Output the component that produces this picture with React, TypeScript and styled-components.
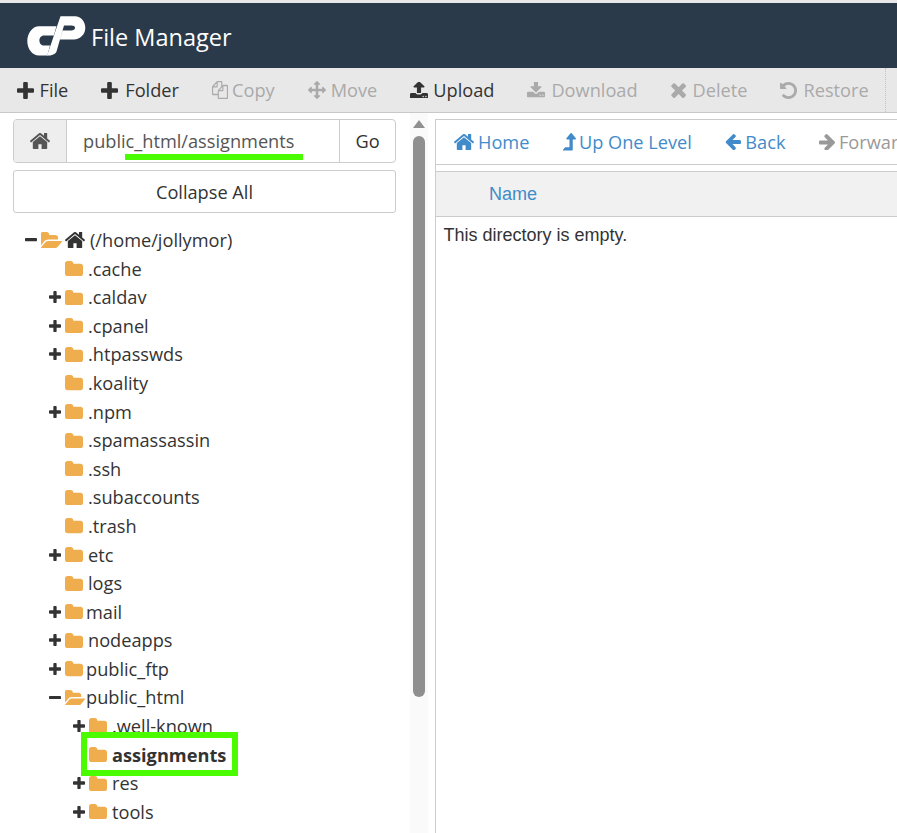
import styled, { createGlobalStyle } from 'styled-components';

const GlobalStyle = createGlobalStyle`
  html, body {
    margin: 0;
    height: 100%;
    overflow: hidden;
    background: #fff;
  }
  body {
    font-family: "Open Sans", sans-serif;
    color: #333;
  }
`;

const Page = styled.div`
  width: 897px;
  height: 833px;
  overflow: hidden;
  display: flex;
  flex-direction: column;
  border-top: 3px solid #e8e8e8;
  box-sizing: border-box;
`;

const Header = styled.header`
  flex: 0 0 65px;
  display: flex;
  align-items: center;
  background: #2b3a4a;
  color: #fff;
  padding-left: 27px;
`;

const Logo = styled.svg`
  width: 59px;
  height: 40px;
  margin-right: 5px;
`;

const Title = styled.h1`
  margin: 4px 0 0;
  font-size: 23.5px;
  font-weight: 400;
  line-height: 1;
`;

const Toolbar = styled.div`
  flex: 0 0 45px;
  box-sizing: border-box;
  display: flex;
  align-items: center;
  gap: 33px;
  padding-left: 17px;
  background: #e8e8e8;
  border-bottom: 1px solid #c8c8c8;
  font-size: 18.2px;
`;

const ToolButton = styled.span<{ $disabled?: boolean; $gap: number }>`
  display: flex;
  align-items: center;
  gap: ${(p) => p.$gap}px;
  white-space: nowrap;
  color: ${(p) => (p.$disabled ? '#aaa' : '#333')};
`;

const ToolDivider = styled.span`
  align-self: stretch;
  margin-left: -17px;
  border-left: 1px dotted #c4c4c4;
`;

const Main = styled.div`
  flex: 1;
  display: flex;
  min-height: 0;
`;

const Sidebar = styled.aside`
  flex: 0 0 410px;
  box-sizing: border-box;
  padding: 6px 14px 0 13px;
`;

const PathBar = styled.div`
  position: relative;
  display: flex;
  height: 44px;
  box-sizing: border-box;
  border: 1px solid #ccc;
  border-radius: 4px;
  font-size: 18.2px;
`;

const PathHome = styled.span`
  flex: 0 0 52px;
  display: flex;
  align-items: center;
  justify-content: center;
  background: #eee;
  border-right: 1px solid #ccc;
  border-radius: 3px 0 0 3px;
  color: #555;
`;

const PathInput = styled.span`
  flex: 1;
  padding-left: 16px;
  line-height: 42px;
  color: #555;
`;

const PathGo = styled.span`
  flex: 0 0 55px;
  text-align: center;
  line-height: 42px;
  border-left: 1px solid #ccc;
`;

const PathMark = styled.span`
  position: absolute;
  left: 111px;
  top: 34px;
  width: 178px;
  height: 6px;
  background: #4bfc00;
`;

const CollapseButton = styled.div`
  margin-top: 7px;
  height: 43px;
  box-sizing: border-box;
  border: 1px solid #ccc;
  border-radius: 3px;
  text-align: center;
  line-height: 42px;
  font-size: 18.2px;
`;

const Tree = styled.ul`
  list-style: none;
  margin: 12.7px 0 0;
  padding: 0;
`;

const TreeRow = styled.li<{ $depth: number }>`
  position: relative;
  display: flex;
  align-items: center;
  height: 28.6px;
  font-size: 18.2px;
  white-space: nowrap;
  padding-left: ${(p) => 12 + p.$depth * 24}px;
`;

const Toggle = styled.span`
  flex: 0 0 14px;
  display: flex;
  align-items: center;
  color: #333;
`;

const FolderSlot = styled.span`
  display: flex;
  align-items: center;
  margin-left: 2px;
  color: #f0ad4e;
`;

const RowLabel = styled.span<{ $bold?: boolean; $gap: number }>`
  margin-left: ${(p) => p.$gap}px;
  font-weight: ${(p) => (p.$bold ? 700 : 400)};
`;

const RootHome = styled.span`
  display: flex;
  margin-left: 3px;
  color: #333;
`;

const SelectedMark = styled.span`
  position: absolute;
  left: 68px;
  top: -8px;
  width: 157px;
  height: 44px;
  box-sizing: border-box;
  border: 6px solid #4bfc00;
`;

const ScrollBar = styled.div`
  flex: 0 0 18px;
  margin-right: 7px;
  display: flex;
  flex-direction: column;
  align-items: center;
  background: #fafafa;
`;

const ScrollArrow = styled.span`
  margin-top: 7px;
  width: 0;
  height: 0;
  border-left: 6px solid transparent;
  border-right: 6px solid transparent;
  border-bottom: 8px solid #8f8f8f;
`;

const ScrollThumb = styled.span`
  margin-top: 8px;
  width: 12px;
  height: 561px;
  border-radius: 6px;
  background: #8f8f8f;
`;

const Content = styled.section`
  flex: 1;
  min-width: 0;
  margin-top: 6px;
  border-left: 1px solid #ccc;
`;

const NavBar = styled.nav`
  height: 46px;
  box-sizing: border-box;
  display: flex;
  align-items: center;
  gap: 33.5px;
  padding-left: 18px;
  border-top: 1px solid #ccc;
  border-bottom: 1px solid #ccc;
  font-size: 18.2px;
  overflow: hidden;
`;

const NavLink = styled.span<{ $disabled?: boolean; $gap: number }>`
  display: flex;
  align-items: center;
  gap: ${(p) => p.$gap}px;
  white-space: nowrap;
  color: ${(p) => (p.$disabled ? '#999' : '#428bca')};
`;

const TableHead = styled.div`
  margin-top: 6px;
  height: 46px;
  box-sizing: border-box;
  padding-left: 53px;
  line-height: 44px;
  background: #f1f1f1;
  border-top: 1px solid #ccc;
  border-bottom: 1px solid #ccc;
  color: #428bca;
  font-family: "Liberation Sans", Arial, sans-serif;
  font-size: 18px;
`;

const EmptyNote = styled.p`
  margin: 8px 0 0 7.5px;
  font-family: "Liberation Sans", Arial, sans-serif;
  font-size: 18px;
  color: #333;
`;

// font-awesome 4 glyphs, box is the glyph's own bounds
const glyphs = {
  plus: {
    box: '192 128 1408 1408',
    d: 'M1600 736v192q0 40-28 68t-68 28h-416v416q0 40-28 68t-68 28h-192q-40 0-68-28t-28-68v-416h-416q-40 0-68-28t-28-68v-192q0-40 28-68t68-28h416v-416q0-40 28-68t68-28h192q40 0 68 28t28 68v416h416q40 0 68 28t28 68z',
  },
  minus: {
    box: '192 640 1408 384',
    d: 'M1600 736v192q0 40-28 68t-68 28h-1216q-40 0-68-28t-28-68v-192q0-40 28-68t68-28h1216q40 0 68 28t28 68z',
  },
  home: {
    box: '95 256 1602 1280',
    d: 'M1472 992v480q0 26-19 45t-45 19h-384v-384h-256v384h-384q-26 0-45-19t-19-45v-480q0-1 .5-3t.5-3l575-474 575 474q1 2 1 6zm223-69l-62 74q-8 9-21 11h-3q-13 0-21-7l-692-577-692 577q-12 8-24 7-13-2-21-11l-62-74q-8-10-7-23.5t11-21.5l719-599q32-26 76-26t76 26l244 204v-195q0-14 9-23t23-9h192q14 0 23 9t9 23v408l219 182q10 8 11 21.5t-7 23.5z',
  },
  folder: {
    box: '64 128 1664 1408',
    d: 'M1728 608v704q0 92-66 158t-158 66h-1216q-92 0-158-66t-66-158v-960q0-92 66-158t158-66h320q92 0 158 66t66 158v32h672q92 0 158 66t66 158z',
  },
  folderOpen: {
    box: '64 128 1815 1408',
    d: 'M1879 952q0 31-31 66l-336 396q-43 51-120.5 86.5t-143.5 35.5h-1088q-34 0-60.5-13t-26.5-43q0-31 31-66l336-396q43-51 120.5-86.5t143.5-35.5h1088q34 0 60.5 13t26.5 43zm-343-344v160h-832q-94 0-197 47.5t-164 119.5l-337 396-5 6q0-4-.5-12.5t-.5-12.5v-960q0-92 66-158t158-66h320q92 0 158 66t66 158v32h544q92 0 158 66t66 158z',
  },
  copy: {
    box: '0 0 1792 1792',
    d: 'M1696 384q40 0 68 28t28 68v1216q0 40-28 68t-68 28h-960q-40 0-68-28t-28-68v-288h-544q-40 0-68-28t-28-68v-672q0-40 20-88t48-76l408-408q28-28 76-48t88-20h416q40 0 68 28t28 68v328q68-40 128-40h416zm-544 213l-299 299h299v-299zm-640-384l-299 299h299v-299zm196 647l316-316v-416h-384v416q0 40-28 68t-68 28h-416v640h512v-256q0-40 20-88t48-76zm956 804v-1152h-384v416q0 40-28 68t-68 28h-416v640h896z',
  },
  move: {
    box: '0 0 1792 1792',
    d: 'M1792 896q0 26-19 45l-256 256q-19 19-45 19t-45-19-19-45v-128h-384v384h128q26 0 45 19t19 45-19 45l-256 256q-19 19-45 19t-45-19l-256-256q-19-19-19-45t19-45 45-19h128v-384h-384v128q0 26-19 45t-45 19-45-19l-256-256q-19-19-19-45t19-45l256-256q19-19 45-19t45 19 19 45v128h384v-384h-128q-26 0-45-19t-19-45 19-45l256-256q19-19 45-19t45 19l256 256q19 19 19 45t-19 45-45 19h-128v384h384v-128q0-26 19-45t45-19 45 19l256 256q19 19 19 45z',
  },
  upload: {
    box: '64 128 1664 1536',
    d: 'M1344 1472q0-26-19-45t-45-19-45 19-19 45 19 45 45 19 45-19 19-45zm256 0q0-26-19-45t-45-19-45 19-19 45 19 45 45 19 45-19 19-45zm128-224v320q0 40-28 68t-68 28h-1472q-40 0-68-28t-28-68v-320q0-40 28-68t68-28h427q21 56 70.5 92t110.5 36h256q61 0 110.5-36t70.5-92h427q40 0 68 28t28 68zm-325-648q-17 40-59 40h-256v448q0 26-19 45t-45 19h-256q-26 0-45-19t-19-45v-448h-256q-42 0-59-40-17-39 14-69l448-448q18-19 45-19t45 19l448 448q31 30 14 69z',
  },
  download: {
    box: '64 128 1664 1408',
    d: 'M1344 1344q0-26-19-45t-45-19-45 19-19 45 19 45 45 19 45-19 19-45zm256 0q0-26-19-45t-45-19-45 19-19 45 19 45 45 19 45-19 19-45zm128-224v320q0 40-28 68t-68 28h-1472q-40 0-68-28t-28-68v-320q0-40 28-68t68-28h465l135 136q58 56 136 56t136-56l136-136h464q40 0 68 28t28 68zm-325-569q17 41-14 70l-448 448q-18 19-45 19t-45-19l-448-448q-31-29-14-70 17-39 59-39h256v-448q0-26 19-45t45-19h256q26 0 45 19t19 45v448h256q42 0 59 39z',
  },
  times: {
    box: '282 346 1208 1208',
    d: 'M1490 1322q0 40-28 68l-136 136q-28 28-68 28t-68-28l-294-294-294 294q-28 28-68 28t-68-28l-136-136q-28-28-28-68t28-68l294-294-294-294q-28-28-28-68t28-68l136-136q28-28 68-28t68 28l294 294 294-294q28-28 68-28t68 28l136 136q28 28 28 68t-28 68l-294 294 294 294q28 28 28 68z',
  },
  undo: {
    box: '128 128 1536 1536',
    d: 'M1664 896q0 156-61 298t-164 245-245 164-298 61q-172 0-327-72.5t-264-204.5q-7-10-6.5-22.5t8.5-20.5l137-138q10-9 25-9 16 2 23 12 73 95 179 147t225 52q104 0 198.5-40.5t163.5-109.5 109.5-163.5 40.5-198.5-40.5-198.5-109.5-163.5-163.5-109.5-198.5-40.5q-98 0-188 35.5t-160 101.5l137 138q31 30 14 69-17 40-59 40h-448q-26 0-45-19t-19-45v-448q0-42 40-59 39-17 69 14l130 129q107-101 244.5-156.5t284.5-55.5q156 0 298 61t245 164 164 245 61 298z',
  },
  levelUp: {
    box: '380 34 1020 1373',
    d: 'M1395 508q-17 35-58 35h-192v832q0 14-9 23t-23 9h-704q-21 0-29-18-8-20 4-35l160-192q9-11 25-11h320v-608h-192q-40 0-58-35-17-37 9-68l320-384q18-22 49-22t49 22l320 384q27 32 9 68z',
  },
  arrowLeft: {
    box: '128 181 1536 1558',
    d: 'M1664 896v128q0 53-32.5 90.5t-84.5 37.5h-704l293 294q38 36 38 90t-38 90l-75 76q-37 37-90 37-52 0-91-37l-651-652q-37-37-37-90 0-52 37-91l651-650q38-38 91-38 52 0 90 38l75 74q38 38 38 91t-38 91l-293 293h704q52 0 84.5 37.5t32.5 90.5z',
  },
  arrowRight: {
    box: '128 181 1472 1558',
    d: 'M1600 960q0 54-37 91l-651 651q-39 37-91 37-51 0-90-37l-75-75q-38-38-38-91t38-91l293-293h-704q-52 0-84.5-37.5t-32.5-90.5v-128q0-53 32.5-90.5t84.5-37.5h704l-293-294q-38-36-38-90t38-90l75-75q38-38 90-38 53 0 91 38l651 651q37 35 37 90z',
  },
};

interface IIconProps {
  name: keyof typeof glyphs;
  width: number;
  height?: number;
}

const Icon = ({ name, width, height }: IIconProps) => {
  const glyph = glyphs[name];
  return (
    <svg
      viewBox={glyph.box}
      width={width}
      height={height}
      preserveAspectRatio={height ? 'none' : undefined}
      fill="currentColor"
      style={{ flex: 'none' }}
    >
      <path d={glyph.d} />
    </svg>
  );
};

interface INode {
  name: string;
  depth: number;
  toggle?: 'plus' | 'minus';
  open?: boolean;
  bold?: boolean;
  gap?: number;
  mark?: boolean;
}

const nodes: INode[] = [
  { name: '.cache', depth: 1 },
  { name: '.caldav', depth: 1, toggle: 'plus' },
  { name: '.cpanel', depth: 1, toggle: 'plus' },
  { name: '.htpasswds', depth: 1, toggle: 'plus' },
  { name: '.koality', depth: 1 },
  { name: '.npm', depth: 1, toggle: 'plus' },
  { name: '.spamassassin', depth: 1 },
  { name: '.ssh', depth: 1 },
  { name: '.subaccounts', depth: 1 },
  { name: '.trash', depth: 1 },
  { name: 'etc', depth: 1, toggle: 'plus' },
  { name: 'logs', depth: 1 },
  { name: 'mail', depth: 1, toggle: 'plus', gap: 3 },
  { name: 'nodeapps', depth: 1, toggle: 'plus' },
  { name: 'public_ftp', depth: 1, toggle: 'plus', gap: 3 },
  { name: 'public_html', depth: 1, toggle: 'minus', open: true, gap: 1 },
  { name: '.well-known', depth: 2, toggle: 'plus' },
  { name: 'assignments', depth: 2, bold: true, mark: true },
  { name: 'res', depth: 2, toggle: 'plus' },
  { name: 'tools', depth: 2, toggle: 'plus' },
];

const tools: {
  icon: keyof typeof glyphs;
  width: number;
  height?: number;
  gap: number;
  label: string;
  disabled?: boolean;
}[] = [
  { icon: 'plus', width: 17, gap: 5.5, label: 'File' },
  { icon: 'plus', width: 17, gap: 7, label: 'Folder' },
  { icon: 'copy', width: 16, height: 18, gap: 4, label: 'Copy', disabled: true },
  { icon: 'move', width: 18, gap: 5, label: 'Move', disabled: true },
  { icon: 'upload', width: 18, gap: 5, label: 'Upload' },
  { icon: 'download', width: 18, gap: 6, label: 'Download', disabled: true },
  { icon: 'times', width: 15, gap: 7, label: 'Delete', disabled: true },
  { icon: 'undo', width: 17, gap: 6, label: 'Restore', disabled: true },
];

const App = () => {
  return (
    <Page>
      <GlobalStyle />
      <Header>
        <Logo viewBox="0 -0.5 59 40">
          <path
            fill="#fff"
            d="M12 9.7H29.5L26.8 19H17C14 19 12.4 21.5 12.4 24C12.4 27 14.5 29 17 29H23L20.3 39H12C5 39 0.3 32 0.3 24.5C0.3 16 6 9.7 12 9.7Z"
          />
          <path
            fill="#fff"
            d="M33.5 -0.3H48C54 -0.3 58.3 5 58.3 11.3C58.3 18 53 23 47 23H33L35.7 14H44C46.5 14 48 13 48 11.3C48 9.8 46.5 9 44.7 9H37L29.5 35C28.5 37.5 25 39.2 20 39.2L33.5 -0.3Z"
          />
        </Logo>
        <Title>File Manager</Title>
      </Header>
      <Toolbar>
        {tools.map((tool) => (
          <ToolButton key={tool.label} $disabled={tool.disabled} $gap={tool.gap}>
            <Icon name={tool.icon} width={tool.width} height={tool.height} />
            {tool.label}
          </ToolButton>
        ))}
        <ToolDivider />
      </Toolbar>
      <Main>
        <Sidebar>
          <PathBar>
            <PathHome>
              <Icon name="home" width={20} />
            </PathHome>
            <PathInput>public_html/assignments</PathInput>
            <PathGo>Go</PathGo>
            <PathMark />
          </PathBar>
          <CollapseButton>Collapse All</CollapseButton>
          <Tree>
            <TreeRow $depth={0}>
              <Toggle>
                <Icon name="minus" width={12} />
              </Toggle>
              <FolderSlot>
                <Icon name="folderOpen" width={21} />
              </FolderSlot>
              <RootHome>
                <Icon name="home" width={20} />
              </RootHome>
              <RowLabel $gap={5}>(/home/jollymor)</RowLabel>
            </TreeRow>
            {nodes.map((node) => (
              <TreeRow key={node.name} $depth={node.depth}>
                <Toggle>
                  {node.toggle === 'plus' && <Icon name="plus" width={12} />}
                  {node.toggle === 'minus' && <Icon name="minus" width={12} />}
                </Toggle>
                <FolderSlot>
                  <Icon name={node.open ? 'folderOpen' : 'folder'} width={node.open ? 20 : 18} />
                </FolderSlot>
                <RowLabel $bold={node.bold} $gap={node.gap ?? 5}>
                  {node.name}
                </RowLabel>
                {node.mark && <SelectedMark />}
              </TreeRow>
            ))}
          </Tree>
        </Sidebar>
        <ScrollBar>
          <ScrollArrow />
          <ScrollThumb />
        </ScrollBar>
        <Content>
          <NavBar>
            <NavLink $gap={4}>
              <Icon name="home" width={20} />
              Home
            </NavLink>
            <NavLink $gap={3}>
              <Icon name="levelUp" width={13} />
              Up One Level
            </NavLink>
            <NavLink $gap={4}>
              <Icon name="arrowLeft" width={16} />
              Back
            </NavLink>
            <NavLink $disabled $gap={4}>
              <Icon name="arrowRight" width={16} />
              Forward
            </NavLink>
          </NavBar>
          <TableHead>Name</TableHead>
          <EmptyNote>This directory is empty.</EmptyNote>
        </Content>
      </Main>
    </Page>
  );
};

export default App;
